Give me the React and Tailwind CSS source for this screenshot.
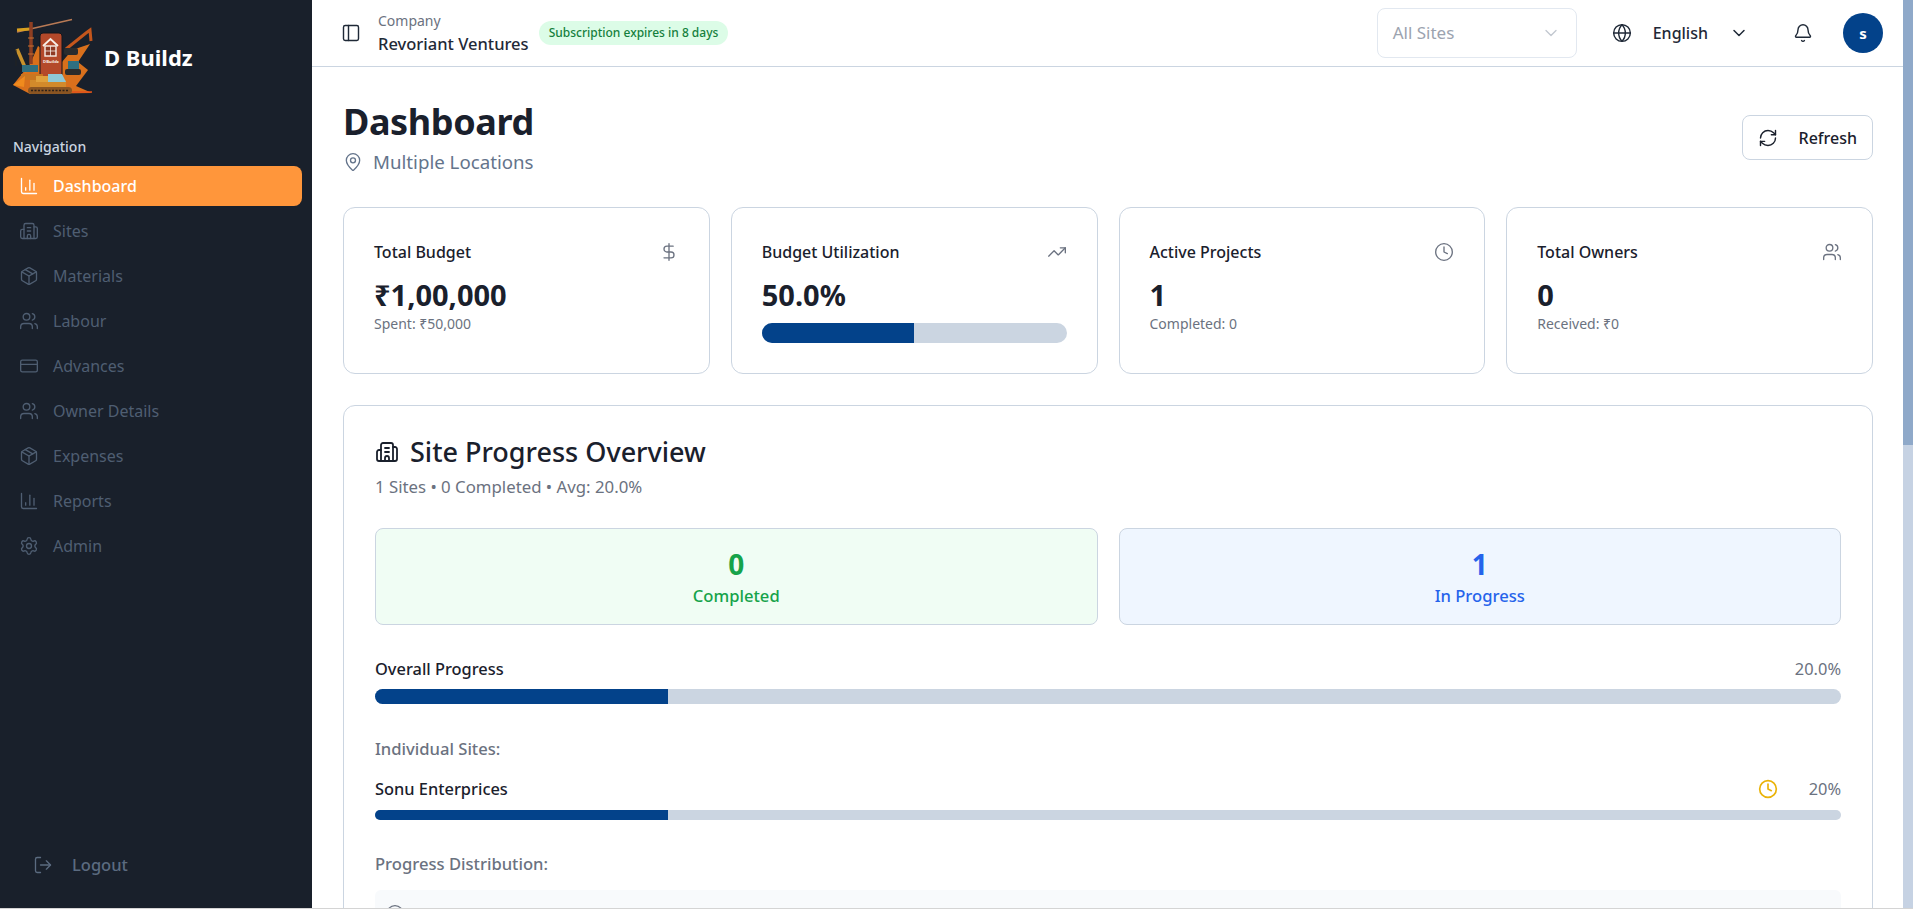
import React from 'react';
import {
  ChartColumn, Building2, Package, Users, CreditCard, Settings, LogOut, PanelLeft, MapPin,
  RefreshCw, Globe, ChevronDown, Bell, DollarSign, TrendingUp, Clock
} from 'lucide-react';

const NAV = [
  { label: 'Dashboard', icon: ChartColumn, active: true },
  { label: 'Sites', icon: Building2 },
  { label: 'Materials', icon: Package },
  { label: 'Labour', icon: Users },
  { label: 'Advances', icon: CreditCard },
  { label: 'Owner Details', icon: Users },
  { label: 'Expenses', icon: Package },
  { label: 'Reports', icon: ChartColumn },
  { label: 'Admin', icon: Settings }
];

// logo coordinates follow the page's own pixels, hence the viewBox offset
function Logo() {
  return (
    <svg width="82" height="80" viewBox="12 15 82 80" className="shrink-0">
      <path d="M30 62 L38 44 L62 60 L72 48 L90 42 L78 60 L88 68 L76 84 L92 91 L30 92 L13 83 Z" fill="#d9701c" />
      <path d="M17 30 L72 17.5" stroke="#b97a55" strokeWidth="1.6" />
      <path d="M17 28 L30 27" stroke="#d8a020" strokeWidth="3" />
      <path d="M31 20 L31 62" stroke="#8f3f22" strokeWidth="3.5" />
      <path d="M28 36 H34 M28 44 H34 M28 52 H34" stroke="#c9702e" strokeWidth="1" />
      <path d="M17 47 L27 70" stroke="#c8922c" strokeWidth="3.5" />
      <path d="M16 48 V64" stroke="#222" strokeWidth="1" />
      <rect x="40" y="31" width="22" height="44" rx="3" fill="#b4492a" stroke="#15171c" strokeWidth="1" />
      <path d="M43 44 L50.5 37 L58 44" fill="none" stroke="#f7efe8" strokeWidth="1.8" />
      <rect x="45" y="44" width="11" height="10" fill="#8f3a24" stroke="#f7efe8" strokeWidth="1.4" />
      <path d="M50.5 44 V54 M45 49 H56" stroke="#f7efe8" strokeWidth="0.8" />
      <text x="51" y="61" textAnchor="middle" fontSize="4.2" fontWeight="700" fill="#f7efe8">DBuildz</text>
      <path d="M66 47 L86 31 L90 28 L91 39" stroke="#c4561c" strokeWidth="3" fill="none" />
      <rect x="64" y="46" width="14" height="7" rx="2" fill="#2a2c2e" />
      <rect x="68" y="59" width="11" height="8" fill="#2f6f80" />
      <rect x="65" y="67" width="16" height="6" rx="2" fill="#2b2b2b" />
      <rect x="22" y="63" width="16" height="7" fill="#2f6f80" />
      <rect x="21" y="72" width="22" height="6" fill="#c9761f" />
      <rect x="30" y="78" width="36" height="7" fill="#d28a2b" />
      <rect x="36" y="74" width="12" height="6" fill="#e0a13c" />
      <path d="M48 72 H62 L66 80 H48 Z" fill="#8fc8d6" />
      <rect x="28" y="85" width="44" height="7" rx="3.5" fill="#8a5522" />
      <path d="M31 88.5 H69" stroke="#2d2118" strokeWidth="1.4" strokeDasharray="2 1.5" />
      <path d="M13 83 L25 74 L24 85 Z" fill="#f08a1d" />
      <path d="M72 90 H92" stroke="#e0501a" strokeWidth="1.5" />
    </svg>
  );
}

function Sidebar() {
  return (
    <aside className="flex w-[312px] shrink-0 flex-col bg-[#19202b]">
      <div className="flex h-[114px] items-center pl-[12px]">
        <Logo />
        <span className="ml-[10px] text-[22px] font-bold text-white">D Buildz</span>
      </div>
      <p className="mt-[21px] pl-[13px] text-[14px] leading-[24px] font-medium text-[#cbd5e1]">Navigation</p>
      <nav className="mt-[7px] flex flex-col gap-[5px] pl-[3px] pr-[10px]">
        {NAV.map(item => (
          <div
            key={item.label}
            className={`flex h-[40px] items-center gap-[14px] rounded-[8px] pl-[16px] text-[16px] ${item.active ? 'bg-[#ff963b] font-medium text-white' : 'text-[#4f5e72]'}`}
          >
            <item.icon className="h-[20px] w-[20px]" strokeWidth={1.6} />
            <span>{item.label}</span>
          </div>
        ))}
      </nav>
      <div className="mt-auto mb-[23px] flex h-[40px] items-center gap-[19px] pl-[33px] text-[16.5px] font-medium text-[#5b6b80]">
        <LogOut className="h-[20px] w-[20px]" strokeWidth={1.6} />
        <span>Logout</span>
      </div>
    </aside>
  );
}

function Header() {
  return (
    <header className="flex h-[67px] shrink-0 items-center border-b border-[#cbd5e1] bg-white pl-[29px] pr-[20px]">
      <PanelLeft className="h-[20px] w-[20px] text-[#1f2937]" strokeWidth={1.7} />
      <div className="ml-[17px] flex flex-col gap-[1px]">
        <span className="text-[14px] leading-[20px] text-[#6b7280]">Company</span>
        <span className="text-[16.5px] leading-[24px] font-medium text-[#1f2937]">Revoriant Ventures</span>
      </div>
      <span className="ml-[10px] rounded-full bg-[#dcfce7] px-[10px] py-[2px] text-[12px] leading-[20px] font-medium text-[#15803d]">Subscription expires in 8 days</span>
      <div className="ml-auto flex h-[50px] w-[200px] items-center justify-between rounded-[8px] border border-[#e2e8f0] pl-[15px] pr-[15px] text-[17px] text-[#9ca3af]">
        <span>All Sites</span>
        <ChevronDown className="h-[20px] w-[20px] text-[#c2c8d0]" strokeWidth={1.6} />
      </div>
      <Globe className="ml-[35px] h-[20px] w-[20px] text-[#1f2937]" strokeWidth={1.7} />
      <span className="ml-[21px] text-[16px] font-medium text-[#1f2937]">English</span>
      <ChevronDown className="ml-[21px] h-[20px] w-[20px] text-[#1f2937]" strokeWidth={1.8} />
      <Bell className="ml-[44px] h-[20px] w-[20px] text-[#1f2937]" strokeWidth={1.7} />
      <div className="ml-[30px] flex h-[40px] w-[40px] items-center justify-center rounded-full bg-[#03428a] text-[15px] font-bold text-white">s</div>
    </header>
  );
}

function StatCard({ title, icon: Icon, value, sub, children }) {
  return (
    <div className="h-[167px] rounded-[12px] border border-[#cbd5e1] bg-white px-[30px] pt-[32px]">
      <div className="flex items-center justify-between">
        <span className="text-[16px] leading-[24px] font-medium text-[#1a202c]">{title}</span>
        <Icon className="h-[20px] w-[20px] text-[#6b7280]" strokeWidth={1.6} />
      </div>
      <p className="mt-[13px] text-[29px] leading-[36px] font-bold text-[#1a202c]">{value}</p>
      {sub && <p className="mt-[1px] text-[14px] leading-[20px] text-[#6b7280]">{sub}</p>}
      {children}
    </div>
  );
}

function Bar({ percent, h }) {
  return (
    <div className={`w-full overflow-hidden rounded-full bg-[#cbd5e1] ${h}`}>
      <div className="h-full bg-[#03428a]" style={{ width: `${percent}%` }} />
    </div>
  );
}

export default function App() {
  return (
    <div
      className="flex h-[909px] overflow-hidden border-b border-[#d4d4d4] bg-white"
      style={{ fontFamily: '"Noto Sans", sans-serif' }}
    >
      <Sidebar />
      <div className="flex min-w-0 flex-1 flex-col overflow-hidden">
        <Header />
        <main className="pl-[31px] pr-[30px] pt-[35px]">
          <div className="flex items-start justify-between">
            <div>
              <h1 className="text-[36px] leading-[40px] font-bold tracking-[-0.4px] text-[#1a202c]">Dashboard</h1>
              <div className="mt-[6px] flex items-center gap-[10px] text-[18.7px] leading-[28px] text-[#64748b]">
                <MapPin className="h-[20px] w-[20px]" strokeWidth={1.6} />
                <span>Multiple Locations</span>
              </div>
            </div>
            <button className="mt-[13px] flex h-[45px] items-center gap-[21px] rounded-[8px] border border-[#cbd5e1] bg-white px-[15px] text-[16px] font-medium text-[#1a202c]">
              <RefreshCw className="h-[20px] w-[20px]" strokeWidth={1.7} />
              <span>Refresh</span>
            </button>
          </div>

          <div className="mt-[31px] grid grid-cols-4 gap-[21px]">
            <StatCard title="Total Budget" icon={DollarSign} value="₹1,00,000" sub="Spent: ₹50,000" />
            <StatCard title="Budget Utilization" icon={TrendingUp} value="50.0%">
              <div className="mt-[10px]"><Bar percent={50} h="h-[20px]" /></div>
            </StatCard>
            <StatCard title="Active Projects" icon={Clock} value="1" sub="Completed: 0" />
            <StatCard title="Total Owners" icon={Users} value="0" sub="Received: ₹0" />
          </div>

          <section className="mt-[31px] rounded-[12px] border border-[#cbd5e1] bg-white px-[31px] pt-[28px]">
            <div className="flex items-center gap-[11px]">
              <Building2 className="h-[24px] w-[24px] text-[#1a202c]" strokeWidth={1.8} />
              <h2 className="text-[27px] leading-[36px] font-medium text-[#1a202c]">Site Progress Overview</h2>
            </div>
            <p className="mt-[5px] text-[16.8px] leading-[24px] text-[#6b7280]">1 Sites • 0 Completed • Avg: 20.0%</p>

            <div className="mt-[29px] grid grid-cols-2 gap-[21px]">
              <div className="flex h-[97px] flex-col items-center justify-center gap-[2px] rounded-[8px] border border-[#cbd5e1] bg-[#f0fdf4] text-[#16a34a]">
                <span className="text-[28px] leading-[36px] font-bold">0</span>
                <span className="text-[16.6px] leading-[24px] font-medium">Completed</span>
              </div>
              <div className="flex h-[97px] flex-col items-center justify-center gap-[2px] rounded-[8px] border border-[#cbd5e1] bg-[#eff6ff] text-[#2563eb]">
                <span className="text-[28px] leading-[36px] font-bold">1</span>
                <span className="text-[16.6px] leading-[24px] font-medium">In Progress</span>
              </div>
            </div>

            <div className="mt-[32px] flex items-center justify-between text-[16.4px] leading-[24px]">
              <span className="font-medium text-[#1a202c]">Overall Progress</span>
              <span className="text-[#6b7280]">20.0%</span>
            </div>
            <div className="mt-[8px]"><Bar percent={20} h="h-[15px]" /></div>

            <p className="mt-[33px] text-[16.6px] leading-[24px] font-medium text-[#6b7280]">Individual Sites:</p>
            <div className="mt-[16px] flex items-center text-[16.4px] leading-[24px]">
              <span className="font-medium text-[#1a202c]">Sonu Enterprices</span>
              <Clock className="ml-auto h-[20px] w-[20px] text-[#eab308]" strokeWidth={2} />
              <span className="ml-[31px] text-[#6b7280]">20%</span>
            </div>
            <div className="mt-[9px]"><Bar percent={20} h="h-[10px]" /></div>

            <p className="mt-[32px] text-[16.6px] leading-[24px] font-medium text-[#6b7280]">Progress Distribution:</p>
            <div className="mt-[14px] flex h-[48px] items-center rounded-[6px] bg-[#f8fafc] px-[10px] text-[16px] text-[#1a202c]">
              <Clock className="h-[20px] w-[20px] text-[#6b7280]" strokeWidth={1.6} />
              <span className="ml-[12px]">Low Spread (0-24%)</span>
              <span className="ml-auto font-medium">1 Sites</span>
            </div>
          </section>
        </main>
      </div>
      <div className="flex w-[10px] shrink-0 flex-col bg-[#c6d2e3]">
        <div className="h-[445px] bg-[#8fa9c9]" />
      </div>
    </div>
  );
}
